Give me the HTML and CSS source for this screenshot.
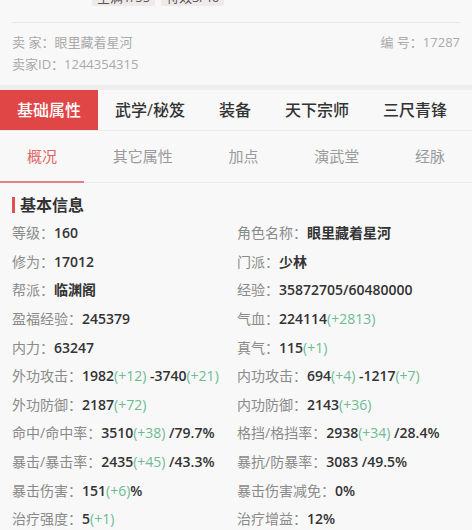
FILE: index.html
```html
<!DOCTYPE html>
<html lang="zh">
<head>
<meta charset="utf-8">
<link rel="stylesheet" href="styles.css">
</head>
<body>
<div class="tags">
  <span class="tag">全满1/55</span>
  <span class="tag">特效3/46</span>
</div>
<div class="divider"></div>
<div class="seller">
  <div class="seller-row"><span>卖 家：眼里藏着星河</span><span>编 号：17287</span></div>
  <div class="seller-row"><span>卖家ID：1244354315</span></div>
</div>
<div class="strip"></div>
<nav class="tabs">
  <div class="tab active">基础属性</div>
  <div class="tab">武学/秘笈</div>
  <div class="tab">装备</div>
  <div class="tab">天下宗师</div>
  <div class="tab">三尺青锋</div>
</nav>
<nav class="subtabs">
  <div class="subtab active">概况</div>
  <div class="subtab">其它属性</div>
  <div class="subtab">加点</div>
  <div class="subtab">演武堂</div>
  <div class="subtab">经脉</div>
</nav>
<h2 class="section-title">基本信息</h2>
<div class="grid">
  <div class="item"><span class="k">等级：</span><span class="v">160</span></div>
  <div class="item"><span class="k">角色名称：</span><span class="v">眼里藏着星河</span></div>
  <div class="item"><span class="k">修为：</span><span class="v">17012</span></div>
  <div class="item"><span class="k">门派：</span><span class="v">少林</span></div>
  <div class="item"><span class="k">帮派：</span><span class="v">临渊阁</span></div>
  <div class="item"><span class="k">经验：</span><span class="v">35872705/60480000</span></div>
  <div class="item"><span class="k">盈福经验：</span><span class="v">245379</span></div>
  <div class="item"><span class="k">气血：</span><span class="v">224114<i>(+2813)</i></span></div>
  <div class="item"><span class="k">内力：</span><span class="v">63247</span></div>
  <div class="item"><span class="k">真气：</span><span class="v">115<i>(+1)</i></span></div>
  <div class="item"><span class="k">外功攻击：</span><span class="v">1982<i>(+12)</i> -3740<i>(+21)</i></span></div>
  <div class="item"><span class="k">内功攻击：</span><span class="v">694<i>(+4)</i> -1217<i>(+7)</i></span></div>
  <div class="item"><span class="k">外功防御：</span><span class="v">2187<i>(+72)</i></span></div>
  <div class="item"><span class="k">内功防御：</span><span class="v">2143<i>(+36)</i></span></div>
  <div class="item"><span class="k">命中/命中率：</span><span class="v">3510<i>(+38)</i> /79.7%</span></div>
  <div class="item"><span class="k">格挡/格挡率：</span><span class="v">2938<i>(+34)</i> /28.4%</span></div>
  <div class="item"><span class="k">暴击/暴击率：</span><span class="v">2435<i>(+45)</i> /43.3%</span></div>
  <div class="item"><span class="k">暴抗/防暴率：</span><span class="v">3083 /49.5%</span></div>
  <div class="item"><span class="k">暴击伤害：</span><span class="v">151<i>(+6)</i>%</span></div>
  <div class="item"><span class="k">暴击伤害减免：</span><span class="v">0%</span></div>
  <div class="item"><span class="k">治疗强度：</span><span class="v">5<i>(+1)</i></span></div>
  <div class="item"><span class="k">治疗增益：</span><span class="v">12%</span></div>
</div>
</body>
</html>
```
FILE: styles.css
```css
* { box-sizing: border-box; }
body {
  margin: 0;
  background: #f8f8f8;
  font-family: "Open Sans", "Noto Sans CJK SC", sans-serif;
  color: #333;
  overflow: hidden;
}
.tags {
  display: flex;
  gap: 6px;
  padding-left: 92px;
  margin-top: -12px;
  height: 18px;
}
.tag {
  background: #efe9e9;
  color: #555;
  font-size: 13px;
  line-height: 18px;
  padding: 0 5px;
  border-radius: 2px;
}
.divider {
  margin: 16px 12px 0;
  border-top: 1px solid #e8e8e8;
}
.seller {
  padding: 8px 12px 10px;
}
.seller-row {
  display: flex;
  justify-content: space-between;
  font-size: 13px;
  line-height: 22px;
  color: #aaa;
}
.strip {
  height: 5px;
  background: #eeeeee;
}
.tabs {
  display: flex;
  height: 41px;
  border-bottom: 1px solid #ececec;
}
.tab {
  padding: 0 17px;
  font-size: 16px;
  line-height: 41px;
  color: #333;
  font-weight: 500;
}
.tab.active {
  background: #e04646;
  color: #fff;
}
.subtabs {
  display: flex;
  justify-content: space-between;
  padding: 0 27px;
  height: 52px;
  border-bottom: 1px solid #ececec;
}
.subtab {
  position: relative;
  font-size: 15px;
  line-height: 50px;
  color: #9a9a9a;
}
.subtab.active {
  color: #e06464;
}
.subtab.active::after {
  content: "";
  position: absolute;
  left: -27px;
  width: 84px;
  bottom: -1px;
  height: 2px;
  background: #e58080;
}
.section-title {
  margin: 11px 12px 2px;
  padding-left: 8px;
  font-size: 16px;
  font-weight: 700;
  line-height: 22px;
  color: #333;
  position: relative;
}
.section-title::before {
  content: "";
  position: absolute;
  left: 0;
  top: 3px;
  width: 3px;
  height: 16px;
  background: #e05050;
}
.grid {
  display: grid;
  grid-template-columns: 225px 1fr;
  grid-auto-rows: 28.6px;
  padding: 0 12px;
  align-items: center;
}
.item {
  font-size: 14px;
  white-space: nowrap;
}
.k { color: #8a8a8a; }
.v { color: #333; font-weight: 600; }
.v i {
  font-style: normal;
  font-weight: 400;
  color: #6cbb93;
}
```
